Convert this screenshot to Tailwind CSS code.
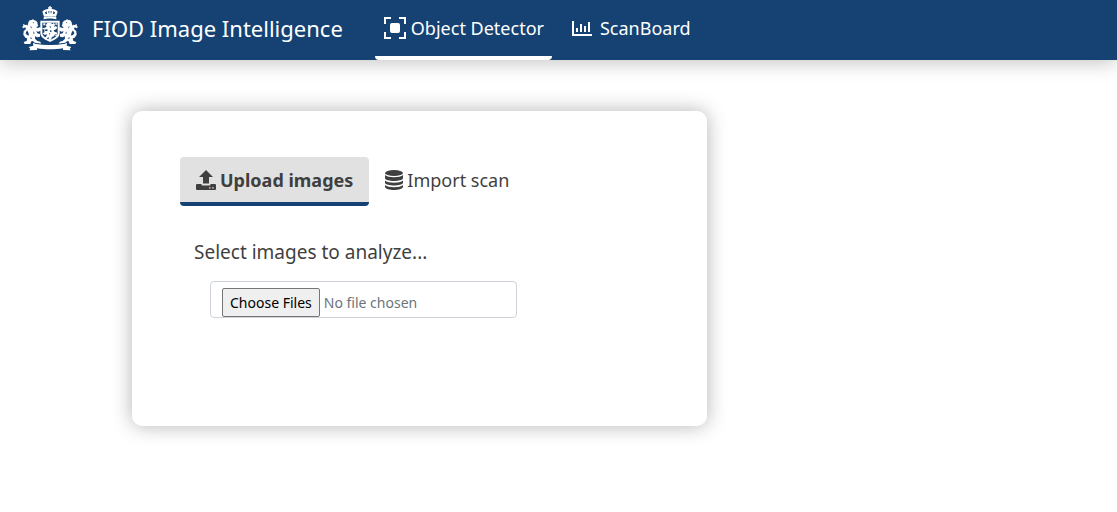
<!DOCTYPE html>
<html lang="en">

<head>
    <meta charset="UTF-8" />
    <meta name="viewport" content="width=device-width, initial-scale=1.0" />
    <title>FIOD Image Intelligence</title>
    <script src="https://cdn.jsdelivr.net/npm/@tailwindcss/browser@4"></script>
</head>

<body class="min-h-screen bg-white font-['Segoe_UI','Noto_Sans',sans-serif] text-[#3f3f3f]">
    <!-- Top bar -->
    <header class="flex h-15 items-stretch bg-[#154273] pl-5 text-white shadow-[0_2px_20px_rgba(0,0,0,0.25)]">
        <a href="#" class="flex items-center text-[22px] whitespace-nowrap">
            <!-- Coat of arms -->
            <svg class="mr-3 mb-1 h-12 w-15 shrink-0" viewBox="0 0 180 144" fill="#fff" aria-hidden="true">
                <!-- crown -->
                <path d="M88 6h4v4h4v4h-4v4h-4v-4h-4v-4h4z" />
                <path d="M72 38l-5-15c5-7 14-8 23-8s18 1 23 8l-5 15c-10-3-26-3-36 0z" />
                <path d="M77 31l-2-6 5-3 1 7zM86 28l-1-7h3v7zM92 28v-7h3l-1 7zM99 29l1-7 5 3-2 6z" fill="#154273" />
                <path d="M71 40c10-4 28-4 38 0v6c-10-3-28-3-38 0z" />
                <!-- shield -->
                <path d="M61 50h58v37c0 13-14 20-29 27-15-7-29-14-29-27z" />
                <path d="M67 56h46v30c0 10-11 16-23 22-12-6-23-12-23-22z" fill="#154273" />
                <path
                    d="M82 57l9-1 6 4 5-3 3 5-3 7 6-3 4 6-6 5-5 2 3 5 6 1 2 7-7-1-3 6-6 2-3 8-8 1 2-8-6 2-5 5-5-5 7-4 4-7-8 2-5-5 5-3-2-6 7 3 6-4-6-2-7 2 1-7 7-2-3-5z" />
                <path d="M70 58h6v6h-6zM106 58h5v4h-5zM68 72h5v4h-5zM70 86h4v4h-4zM106 92h4v4h-4z" />
                <path d="M89 66l5 3-4 3zM92 77l4 5-7 3zM86 89l5-2-2 5z" fill="#154273" />
                <!-- lions -->
                <g id="lion">
                    <path
                        d="M25 55l4-6 6-1 4-2 4 3 5 1 5 6-1 4 3 4-3 4-4 1 5 3 8-3 3 9-8 5-7-1 3 6 8 2v8l-9 2-5-4-1 8 7 7 9 2 3 7-16-1-10-8-4 1-3 8H14l-3-6 9-3 2-8 5-8-1-7-5-10 2-10z" />
                    <path
                        d="M29 106l-13-5-6-9 1-10 7-7-2-5-6 3-4-5 4-2-1-6 7 3 6-1 3 8-1 7-6 7-1 4 4 5 8 2z" />
                    <path d="M37 56l5-1v3zM31 65l4 4-1 5zM40 82l4 5-3 4zM31 100l6 3-5 2z" fill="#154273" />
                </g>
                <use href="#lion" transform="translate(180 0) scale(-1 1)" />
                <!-- ribbon -->
                <path d="M39 117c28 5 74 5 102 0l-1 8 14 4-5 5 3 5-23-1v-5c-24 4-54 4-78 0v5l-23 1 3-5-5-5 14-4z" />
                <path d="M44 116c30 5 62 5 92 0v3c-30 5-62 5-92 0z" fill="#154273" />
            </svg>
            <span class="pb-1">FIOD Image Intelligence</span>
        </a>

        <nav class="ml-8 flex items-stretch gap-4 text-lg whitespace-nowrap">
            <a href="#" class="flex items-center gap-1 rounded-b-sm border-b-4 border-white px-2">
                <svg class="size-6 shrink-0" viewBox="0 0 24 24" aria-hidden="true">
                    <path d="M2 8V2h6M16 2h6v6M22 16v6h-6M8 22H2v-6" fill="none" stroke="#fff" stroke-width="2" />
                    <rect x="7" y="7" width="10" height="10" rx="2" fill="#fff" />
                </svg>
                Object Detector
            </a>
            <a href="#" class="flex items-center gap-2 border-b-4 border-transparent px-1">
                <svg class="h-4 w-5 shrink-0" viewBox="0 0 20 16" aria-hidden="true">
                    <path d="M1 1v14h19" fill="none" stroke="#fff" stroke-width="2" />
                    <path d="M5 12V8M9 12V4M13 12V6M17 12V2" fill="none" stroke="#fff" stroke-width="2" />
                </svg>
                ScanBoard
            </a>
        </nav>
    </header>

    <!-- Upload card -->
    <main class="mx-auto max-w-7xl px-33 pt-[51px]">
        <section
            class="w-full max-w-[575px] rounded-[10px] bg-white px-12 pt-[46px] pb-27 shadow-[0_0_20px_rgba(0,0,0,0.3)]">
            <div class="flex text-lg whitespace-nowrap">
                <button type="button"
                    class="flex h-[49px] items-center gap-1 rounded-sm border-b-4 border-[#154273] bg-[#e1e1e1] px-4 font-bold">
                    <svg class="size-5 shrink-0" viewBox="0 0 20 20" fill="currentColor" aria-hidden="true">
                        <path d="M10 0l7 7h-4v6.500H7V7H3z" />
                        <path fill-rule="evenodd"
                            d="M1 14h4.500v.500a1 1 0 001 1h7a1 1 0 001-1V14H19a1 1 0 011 1v4a1 1 0 01-1 1H1a1 1 0 01-1-1v-4a1 1 0 011-1zM13 17.200v1.300h1.500v-1.300zM16.200 17.200v1.300h1.500v-1.300z" />
                    </svg>
                    Upload images
                </button>
                <button type="button" class="flex h-[49px] items-center gap-1 border-b-4 border-transparent px-4">
                    <svg class="h-5 w-[18px] shrink-0" viewBox="0 0 18 20" fill="currentColor" aria-hidden="true">
                        <ellipse cx="9" cy="3" rx="9" ry="3" />
                        <path d="M0 5c3 3 15 3 18 0v3.500c-1 3.300-17 3.300-18 0z" />
                        <path d="M0 10.500c3 3 15 3 18 0V13c-1 3.300-17 3.300-18 0z" />
                        <path d="M0 15c3 3 15 3 18 0v2c-1 4-17 4-18 0z" />
                    </svg>
                    Import scan
                </button>
            </div>

            <div class="px-[14px] pt-8">
                <label for="images" class="block text-[19px] leading-7">Select images to analyze...</label>
                <div class="px-4 pt-[15px]">
                    <input type="file" id="images" multiple
                        class="block h-[37px] w-full max-w-[307px] rounded-sm border border-[#ced4da] px-[11px] pt-[6px] text-sm text-[#6c757d] file:mr-1 file:h-[29px] file:rounded-xs file:border file:border-solid file:border-[#767676] file:bg-[#efefef] file:px-[7px] file:text-sm file:text-black" />
                </div>
            </div>
        </section>
    </main>
</body>

</html>
